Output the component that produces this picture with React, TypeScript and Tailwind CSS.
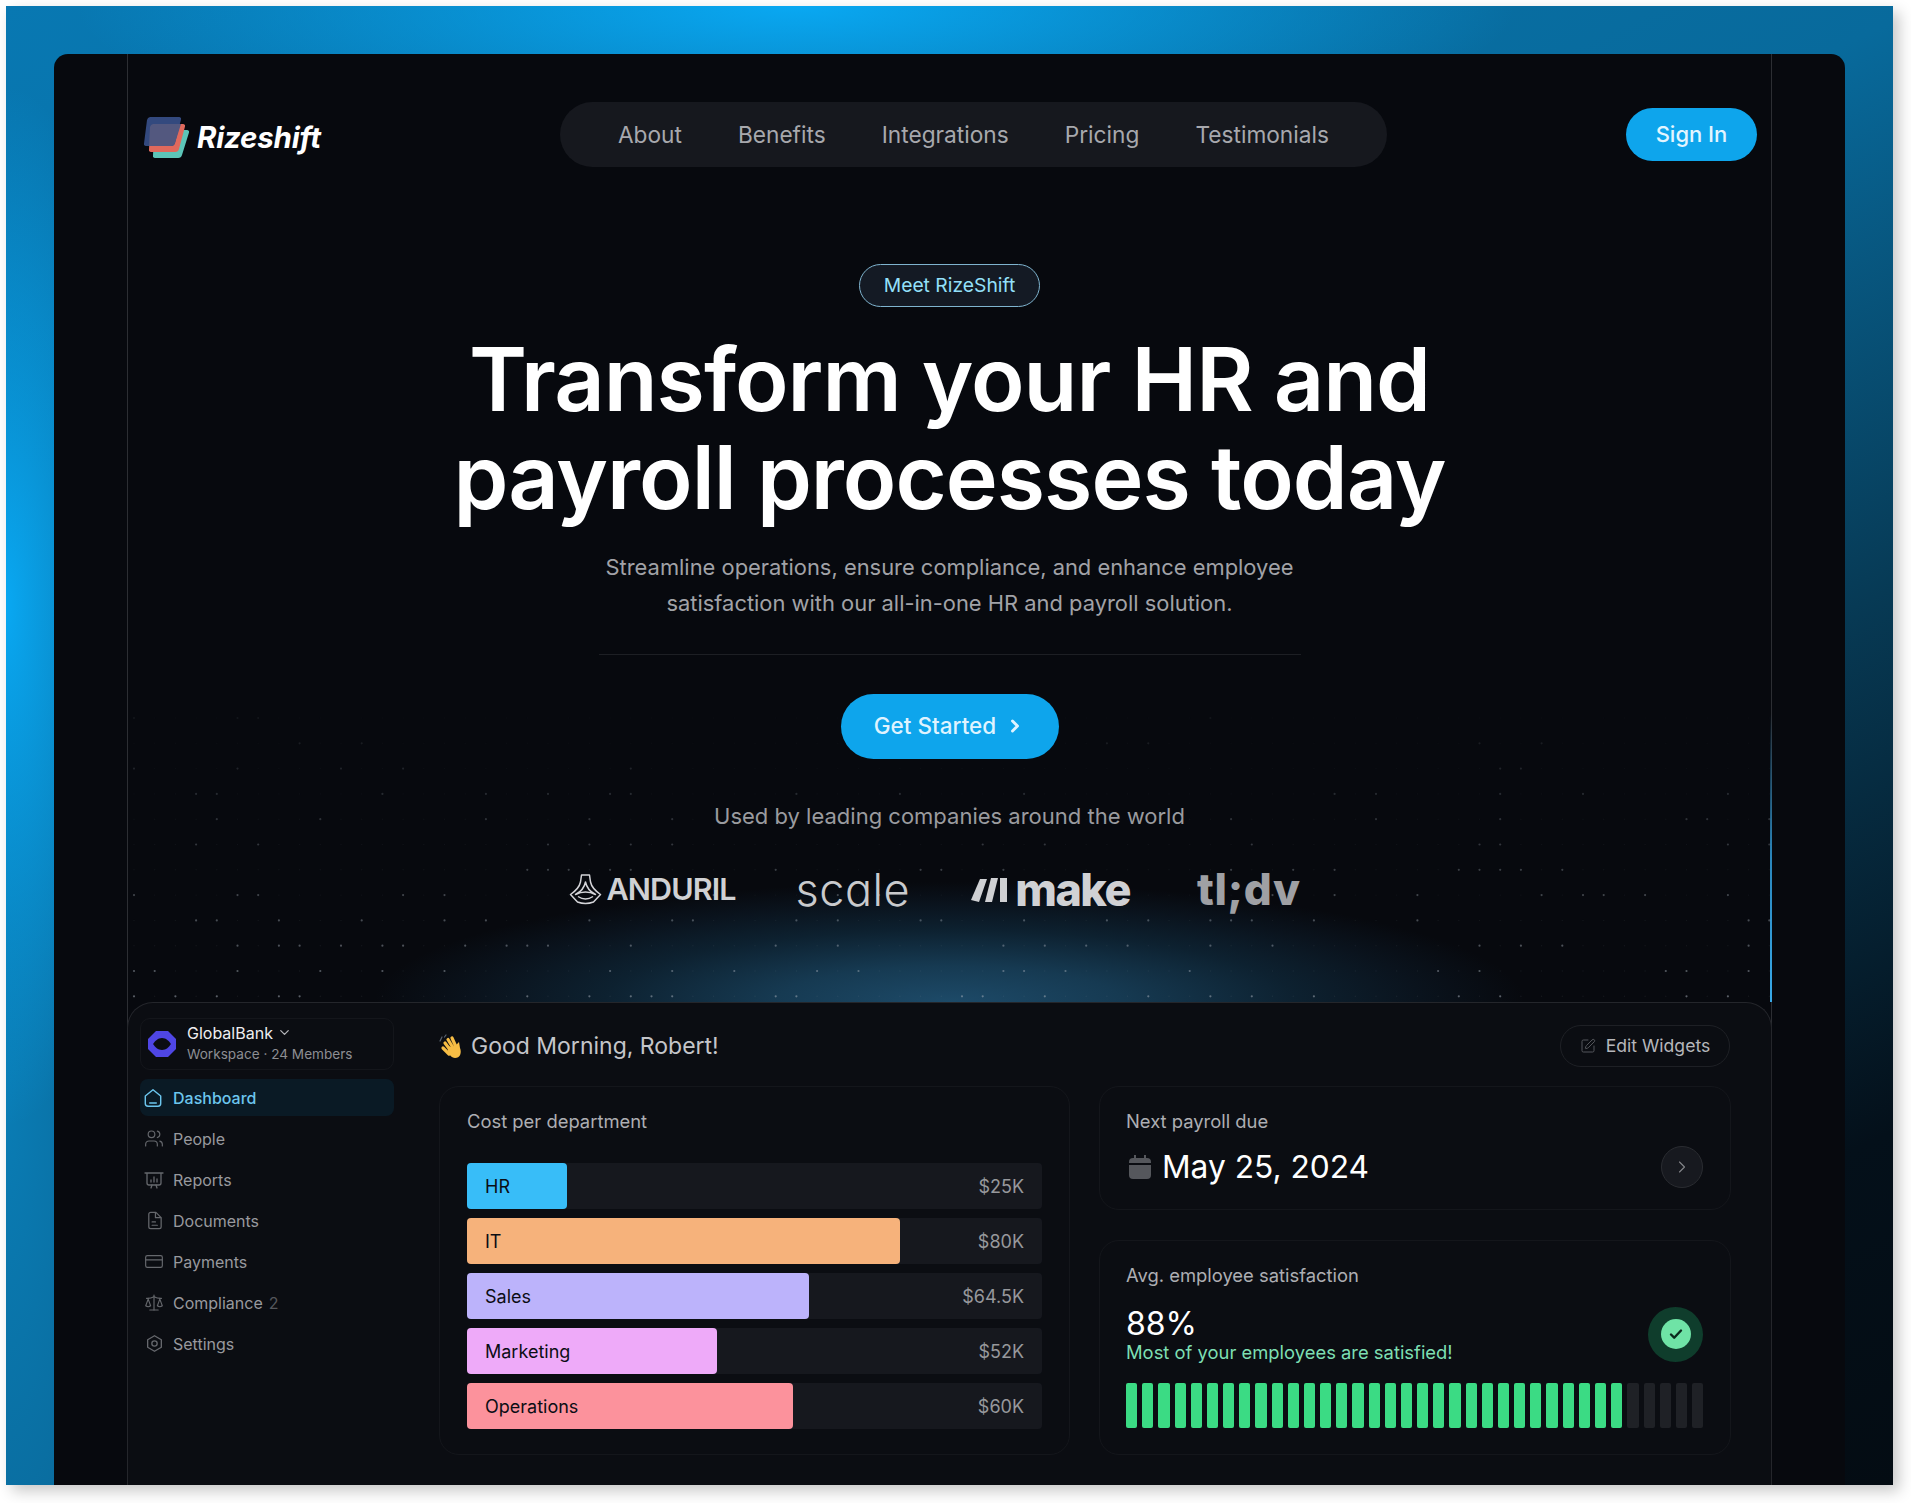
import { ChevronDown, ChevronRight, CreditCard, Scale, SquarePen, Users } from "lucide-react";

const navLinks = ["About", "Benefits", "Integrations", "Pricing", "Testimonials"];

const departments = [
    { name: "HR", value: "$25K", fill: "w-[100px] bg-[#38bdf8]" },
    { name: "IT", value: "$80K", fill: "w-[433px] bg-[#f6b27b]" },
    { name: "Sales", value: "$64.5K", fill: "w-[342px] bg-[#bcb3fb]" },
    { name: "Marketing", value: "$52K", fill: "w-[250px] bg-[#eeaaf9]" },
    { name: "Operations", value: "$60K", fill: "w-[326px] bg-[#fc929c]" },
];

const HomeIcon = ({ className }: { className?: string }) => (
    <svg viewBox="0 0 20 20" fill="none" stroke="currentColor" strokeWidth="1.3" className={className}>
        <path d="M3 8.2 10 2.5l7 5.7V15a2.500 2.500 0 0 1-2.500 2.500h-9A2.500 2.500 0 0 1 3 15Z" strokeLinejoin="round" />
        <path d="M7 14.500h6" strokeLinecap="round" />
    </svg>
);

const HexIcon = ({ className }: { className?: string }) => (
    <svg viewBox="0 0 20 20" fill="none" stroke="currentColor" strokeWidth="1.4" className={className}>
        <path d="M10 1.800 17.200 6v8L10 18.200 2.800 14V6Z" strokeLinejoin="round" />
        <circle cx="10" cy="10" r="2.800" />
    </svg>
);

const ReportIcon = ({ className }: { className?: string }) => (
    <svg viewBox="0 0 20 20" fill="none" stroke="currentColor" strokeWidth="1.3" strokeLinecap="round" className={className}>
        <path d="M1 3h18M3 3v10a2 2 0 0 0 2 2h10a2 2 0 0 0 2-2V3" />
        <path d="M7 12v-2M10 12V7M13 12V9M8 15l-1 3M12 15l1 3" />
    </svg>
);

const DocIcon = ({ className }: { className?: string }) => (
    <svg viewBox="0 0 20 20" fill="none" stroke="currentColor" strokeWidth="1.3" strokeLinecap="round" strokeLinejoin="round" className={className}>
        <path d="M6 1.500h5.500L17 7v9.500a2 2 0 0 1-2 2H6a2 2 0 0 1-2-2v-13a2 2 0 0 1 2-2Z" />
        <path d="M11 2v5h5.500M7.500 11.500H11M7.500 15h5.500" />
    </svg>
);

const sideItems = [
    { name: "People", icon: <Users className="w-[21px] h-[21px]" strokeWidth={1.4} /> },
    { name: "Reports", icon: <ReportIcon className="w-[20px] h-[20px]" /> },
    { name: "Documents", icon: <DocIcon className="w-[19px] h-[19px]" /> },
    { name: "Payments", icon: <CreditCard className="w-[21px] h-[21px]" strokeWidth={1.4} /> },
    { name: "Compliance", badge: "2", icon: <Scale className="w-[21px] h-[21px]" strokeWidth={1.4} /> },
    { name: "Settings", icon: <HexIcon className="w-[19px] h-[19px]" /> },
];

const LogoMark = () => (
    <svg width="46" height="42" viewBox="0 0 46 42">
        <path d="M13 13h30a2 2 0 0 1 2 2.600L38 38a4 4 0 0 1-4 3H11a2 2 0 0 1-2-2.600L10 16a4 4 0 0 1 3-3Z" fill="#5cc5b8" />
        <path d="M9 7h30a2 2 0 0 1 2 2.600L35 32a4 4 0 0 1-4 3H7a2 2 0 0 1-2-2.600L6 10a4 4 0 0 1 3-3Z" fill="#e0695c" />
        <path d="M6 0h29a2 2 0 0 1 2 2.600L31 26a4 4 0 0 1-4 3H2a2 2 0 0 1-2-2.600L3 3a4 4 0 0 1 3-3Z" fill="#33497e" />
        <path d="M9 7h28l-6 19a4 4 0 0 1-4 3H5L6 10a4 4 0 0 1 3-3Z" fill="#53587f" />
    </svg>
);

const AndurilMark = () => (
    <svg width="33" height="31" viewBox="0 0 33 31" fill="none" stroke="#d4d4d8" strokeWidth="1.5" strokeLinejoin="round">
        <path d="M12.500 1h8l1 7c1 5 5 9 10 12.500l-7 7.500q-8 3-16 0l-7-7.500C6.500 17 10.500 13 11.500 8Z" />
        <path d="M16.500 8c-1 5-5 10-10 12.500q10-5 20 0c-5-2.500-9-7.500-10-12.500Z" />
        <path d="M9 22.500q7.500 5 15 0" />
    </svg>
);

const MakeMark = () => (
    <svg width="36" height="27" viewBox="0 0 36 27" fill="#cfd0d3">
        <path d="M9 3h7L8 26l-8-2Z" />
        <path d="M20 2h7l-6 24h-7Z" />
        <path d="M29 2h7v24h-7Z" />
    </svg>
);

const HandIcon = () => (
    <svg width="24" height="26" viewBox="0 0 24 26" fill="none" strokeLinecap="round">
        <path d="M3 3 1 7M7 1 5.500 3" stroke="#5b6472" strokeWidth="1.2" />
        <g stroke="#f7bd45" strokeWidth="3.2">
            <path d="m6 9 6 8M9 5.500l6 10M13 4l4.500 10M4 14l6 6" />
        </g>
        <path d="M9 12c-1 5 1 11 7 12 5 0 7-5 5-10l-1-6-3 3-1 3Z" fill="#f7bd45" />
    </svg>
);

const Dots = () => {
    const dots = [];
    for (let row = 0; row < 12; row++) {
        for (let col = 0; col < 80; col++) {
            const h = (Math.sin(row * 12.9898 + col * 78.233) * 43758.5453) % 1;
            const rnd = Math.abs(h);
            const bright = rnd < 0.08 + row * 0.018;
            dots.push(
                <circle
                    key={`${row}-${col}`}
                    cx={6 + col * 20.7}
                    cy={2 + row * 25.3}
                    r={bright ? 1.1 : 0.7}
                    fill="#a6aeb8"
                    opacity={bright ? 0.08 + row * 0.04 : 0.03 + row * 0.006}
                />
            );
        }
    }
    return (
        <svg className="absolute left-0 bottom-0 w-full h-[286px]" viewBox="0 0 1643 286" aria-hidden="true">
            {dots}
        </svg>
    );
};

const App = () => {
    return (
        <div className="w-[1911px] h-[1503px] bg-white pt-[6px] pl-[6px] overflow-hidden font-['Inter',sans-serif]">
            <div className="w-[1887px] h-[1479px] pt-[48px] pl-[48px] shadow-[6px_6px_14px_rgba(0,0,0,0.22)] bg-[radial-gradient(ellipse_720px_150px_at_790px_0px,#09a8f2_0%,transparent_100%),radial-gradient(ellipse_140px_520px_at_0px_600px,#09a8f2_0%,transparent_100%),radial-gradient(ellipse_170px_800px_at_0px_1100px,#0a7cb4_0%,#0a6c9e_60%,transparent_100%),linear-gradient(155deg,#0878b2_0%,#086a9c_38%,#073a55_62%,#04101a_85%,#040c13_100%)]">
                <div className="w-[1791px] h-[1431px] rounded-t-[14px] bg-[#07090e] pl-[73px]">
                    <div className="w-[1645px] h-full border-x border-[#2c2e33] relative">
                        <div className="absolute right-[-1px] top-[660px] h-[288px] w-[2px] bg-gradient-to-b from-transparent via-[#2a86bb] to-[#38a9e8]"></div>

                        {/* hero */}
                        <div className="relative h-[948px] flex flex-col items-center">
                            <div className="absolute left-[240px] right-[240px] bottom-0 h-[120px] bg-[radial-gradient(ellipse_575px_120px_at_50%_100%,#1d4a68_0%,#163a52_30%,#0d2130_60%,#0a131d_82%,transparent_100%)]"></div>
                            <Dots />

                            <header className="relative w-full pt-[48px] pl-[16px] pr-[14px] flex items-center justify-between">
                                <a className="flex items-center gap-[7px] mt-[6px]">
                                    <LogoMark />
                                    <span className="text-[29.500px] font-bold italic text-white tracking-[-0.2px] leading-none">Rizeshift</span>
                                </a>
                                <nav className="h-[65px] w-[827px] pt-[2px] rounded-full bg-[#16181e] flex items-center justify-center gap-[56px] text-[22.700px] text-[#a7a8ad]">
                                    {navLinks.map((link) => (
                                        <a key={link}>{link}</a>
                                    ))}
                                </nav>
                                <button className="w-[131px] h-[53px] rounded-full bg-[#0ea5ec] text-[22px] font-medium text-[#e3f5ff]">Sign In</button>
                            </header>

                            <span className="relative mt-[97px] w-[181px] h-[43px] rounded-full border border-[#7fb4cf] bg-[#141a24] flex items-center justify-center text-[19.300px] text-[#93e0fa]">Meet RizeShift</span>

                            <h1 className="relative mt-[23px] text-[88px] leading-[98px] font-semibold text-white text-center tracking-[-1px]">
                                Transform your HR and<br />payroll processes today
                            </h1>

                            <p className="relative mt-[23px] text-[21.900px] leading-[36px] text-[#a1a2a7] text-center">
                                Streamline operations, ensure compliance, and enhance employee<br />satisfaction with our all-in-one HR and payroll solution.
                            </p>

                            <div className="relative mt-[33px] w-[702px] h-px bg-[#1d1f24]"></div>

                            <button className="relative mt-[39px] w-[218px] h-[65px] pb-[2px] rounded-full bg-[#0ea5ec] text-[22.500px] font-medium text-[#dff3ff] flex items-center justify-center gap-[9px]">
                                Get Started <ChevronRight className="w-[20px] h-[20px]" strokeWidth={3.5} />
                            </button>

                            <p className="relative mt-[43px] text-[22px] leading-[28px] text-[#9a9b9f]">Used by leading companies around the world</p>

                            <div className="relative mt-[34px] mr-[29px] h-[50px] flex items-center text-[#d0d1d4]">
                                <div className="flex items-center gap-[4px]">
                                    <AndurilMark />
                                    <span className="text-[30.500px] font-semibold tracking-[-0.9px]">ANDURIL</span>
                                </div>
                                <span className="ml-[60px] text-[45px] font-light tracking-[0.5px] leading-none [font-feature-settings:'cv11'] text-[#c9cacd]">scale</span>
                                <div className="ml-[61px] flex items-center gap-[8px]">
                                    <MakeMark />
                                    <span className="text-[45px] font-extrabold tracking-[-1.5px] leading-none">make</span>
                                </div>
                                <span className="ml-[67px] text-[44px] font-extrabold tracking-[0.5px] leading-none text-[#9fa0a4]">tl;dv</span>
                            </div>
                        </div>

                        {/* dashboard preview */}
                        <div className="relative -mx-px h-[483px] rounded-t-[26px] border-t border-x border-[#24262b] bg-[#0b0d12] flex">
                            <aside className="w-[254px] ml-[12px] pt-[15px] shrink-0">
                                <div className="h-[52px] rounded-[10px] border border-[#14161b] flex items-center pl-[7px]">
                                    <svg width="28" height="26" viewBox="0 0 28 26" className="shrink-0">
                                        <path d="M8 0h12l8 8v10l-8 8H8l-8-8V8Z" fill="#4f46e5" />
                                        <path d="M14 7c4 0 7 3 9 6-2 3-5 6-9 6s-7-3-9-6c2-3 5-6 9-6Z" fill="#0b0d12" />
                                    </svg>
                                    <div className="ml-[11px] mt-[-2px] leading-none">
                                        <div className="flex items-center gap-[4px] text-[16px] text-[#eeeef0]">
                                            GlobalBank <ChevronDown className="w-[15px] h-[15px] text-[#b5b6ba]" />
                                        </div>
                                        <div className="mt-[7px] text-[13.600px] text-[#8d8e93]">Workspace · 24 Members</div>
                                    </div>
                                </div>
                                <div className="mt-[9px] flex flex-col gap-[4px]">
                                    <a className="h-[37px] rounded-[8px] bg-[#0a1a25] flex items-center gap-[9px] pl-[2px] text-[16px] font-medium text-[#6cc6ee]">
                                        <HomeIcon className="w-[22px] h-[22px]" />
                                        Dashboard
                                    </a>
                                    {sideItems.map((item) => (
                                        <a key={item.name} className="h-[37px] flex items-center gap-[9px] pl-[4px] text-[16px] text-[#98999e]">
                                            <span className="w-[20px] flex justify-center text-[#66686d]">{item.icon}</span>
                                            {item.name}
                                            {item.badge && <span className="ml-[-3px] text-[#55575c]">{item.badge}</span>}
                                        </a>
                                    ))}
                                </div>
                            </aside>

                            <main className="w-[1292px] ml-[45px] pt-[22px]">
                                <div className="h-[41px] flex items-center justify-between">
                                    <div className="mt-[2px] flex items-center gap-[8px] text-[23px] text-[#c4c5c9]">
                                        <HandIcon />
                                        Good Morning, Robert!
                                    </div>
                                    <button className="mr-px w-[170px] h-[42px] pt-px rounded-full border border-[#1e2025] flex items-center justify-center gap-[10px] text-[17.600px] text-[#b6b7bb]">
                                        <SquarePen className="w-[16px] h-[16px] text-[#55575c]" strokeWidth={1.5} />
                                        Edit Widgets
                                    </button>
                                </div>

                                <div className="mt-[20px] grid grid-cols-[631px_632px] gap-[29px]">
                                    <section className="h-[369px] rounded-[20px] border border-[#14161b] px-[27px] pt-[21px]">
                                        <h2 className="text-[18.400px] leading-[26px] text-[#adaeb2]">Cost per department</h2>
                                        <div className="mt-[29px] flex flex-col gap-[9px]">
                                            {departments.map((d) => (
                                                <div key={d.name} className="relative h-[46px] rounded-[4px] bg-[#16181e] flex items-center justify-end pr-[18px] text-[18px] text-[#97989c]">
                                                    <div className={`absolute left-0 top-0 h-full rounded-[4px] pl-[18px] flex items-center text-[#0b0d14] ${d.fill}`}>{d.name}</div>
                                                    {d.value}
                                                </div>
                                            ))}
                                        </div>
                                    </section>

                                    <div className="flex flex-col gap-[30px]">
                                        <section className="h-[124px] rounded-[20px] border border-[#14161b] pl-[26px] pr-[27px] pt-[21px]">
                                            <h2 className="text-[18.400px] leading-[26px] text-[#adaeb2]">Next payroll due</h2>
                                            <div className="mt-[11px] flex items-center justify-between">
                                                <div className="flex items-center gap-[11px] pl-[3px] text-[31.700px] leading-[44px] text-white">
                                                    <svg width="22" height="24" viewBox="0 0 22 24" fill="#55575c">
                                                        <path d="M5 0h2v3h8V0h2v3h1a4 4 0 0 1 4 4v1H0V7a4 4 0 0 1 4-4h1Z" />
                                                        <path d="M0 10h22v10a4 4 0 0 1-4 4H4a4 4 0 0 1-4-4Z" />
                                                    </svg>
                                                    May 25, 2024
                                                </div>
                                                <span className="w-[42px] h-[42px] rounded-full border border-[#2a2c31] bg-[#17191f] flex items-center justify-center text-[#85868b]">
                                                    <ChevronRight className="w-[20px] h-[20px]" strokeWidth={1.3} />
                                                </span>
                                            </div>
                                        </section>

                                        <section className="h-[215px] rounded-[20px] border border-[#14161b] pl-[26px] pr-[27px] pt-[21px]">
                                            <h2 className="text-[18.400px] leading-[26px] text-[#adaeb2]">Avg. employee satisfaction</h2>
                                            <div className="mt-[18px] flex items-center justify-between">
                                                <div>
                                                    <div className="text-[32px] leading-[36px] text-white">88%</div>
                                                    <div className="text-[18.400px] leading-[20px] text-[#7ddfb2]">Most of your employees are satisfied!</div>
                                                </div>
                                                <span className="w-[55px] h-[55px] rounded-full bg-[#0f3d2c] flex items-center justify-center">
                                                    <span className="w-[30px] h-[30px] rounded-full bg-[#6fe3a6] flex items-center justify-center">
                                                        <svg width="16" height="16" viewBox="0 0 16 16" fill="none" stroke="#0b2a1d" strokeWidth="2.400" strokeLinecap="round" strokeLinejoin="round">
                                                            <path d="m3 8.500 3.200 3.200L13 4.500" />
                                                        </svg>
                                                    </span>
                                                </span>
                                            </div>
                                            <div className="mt-[21px] h-[45px] flex gap-[5px]">
                                                {Array.from({ length: 36 }).map((_, i) => (
                                                    <span key={i} className={`flex-1 rounded-[2px] ${i < 31 ? "bg-[#3bdb84]" : "bg-[#1f2126]"}`}></span>
                                                ))}
                                            </div>
                                        </section>
                                    </div>
                                </div>
                            </main>
                        </div>
                    </div>
                </div>
            </div>
        </div>
    );
};

export default App;
